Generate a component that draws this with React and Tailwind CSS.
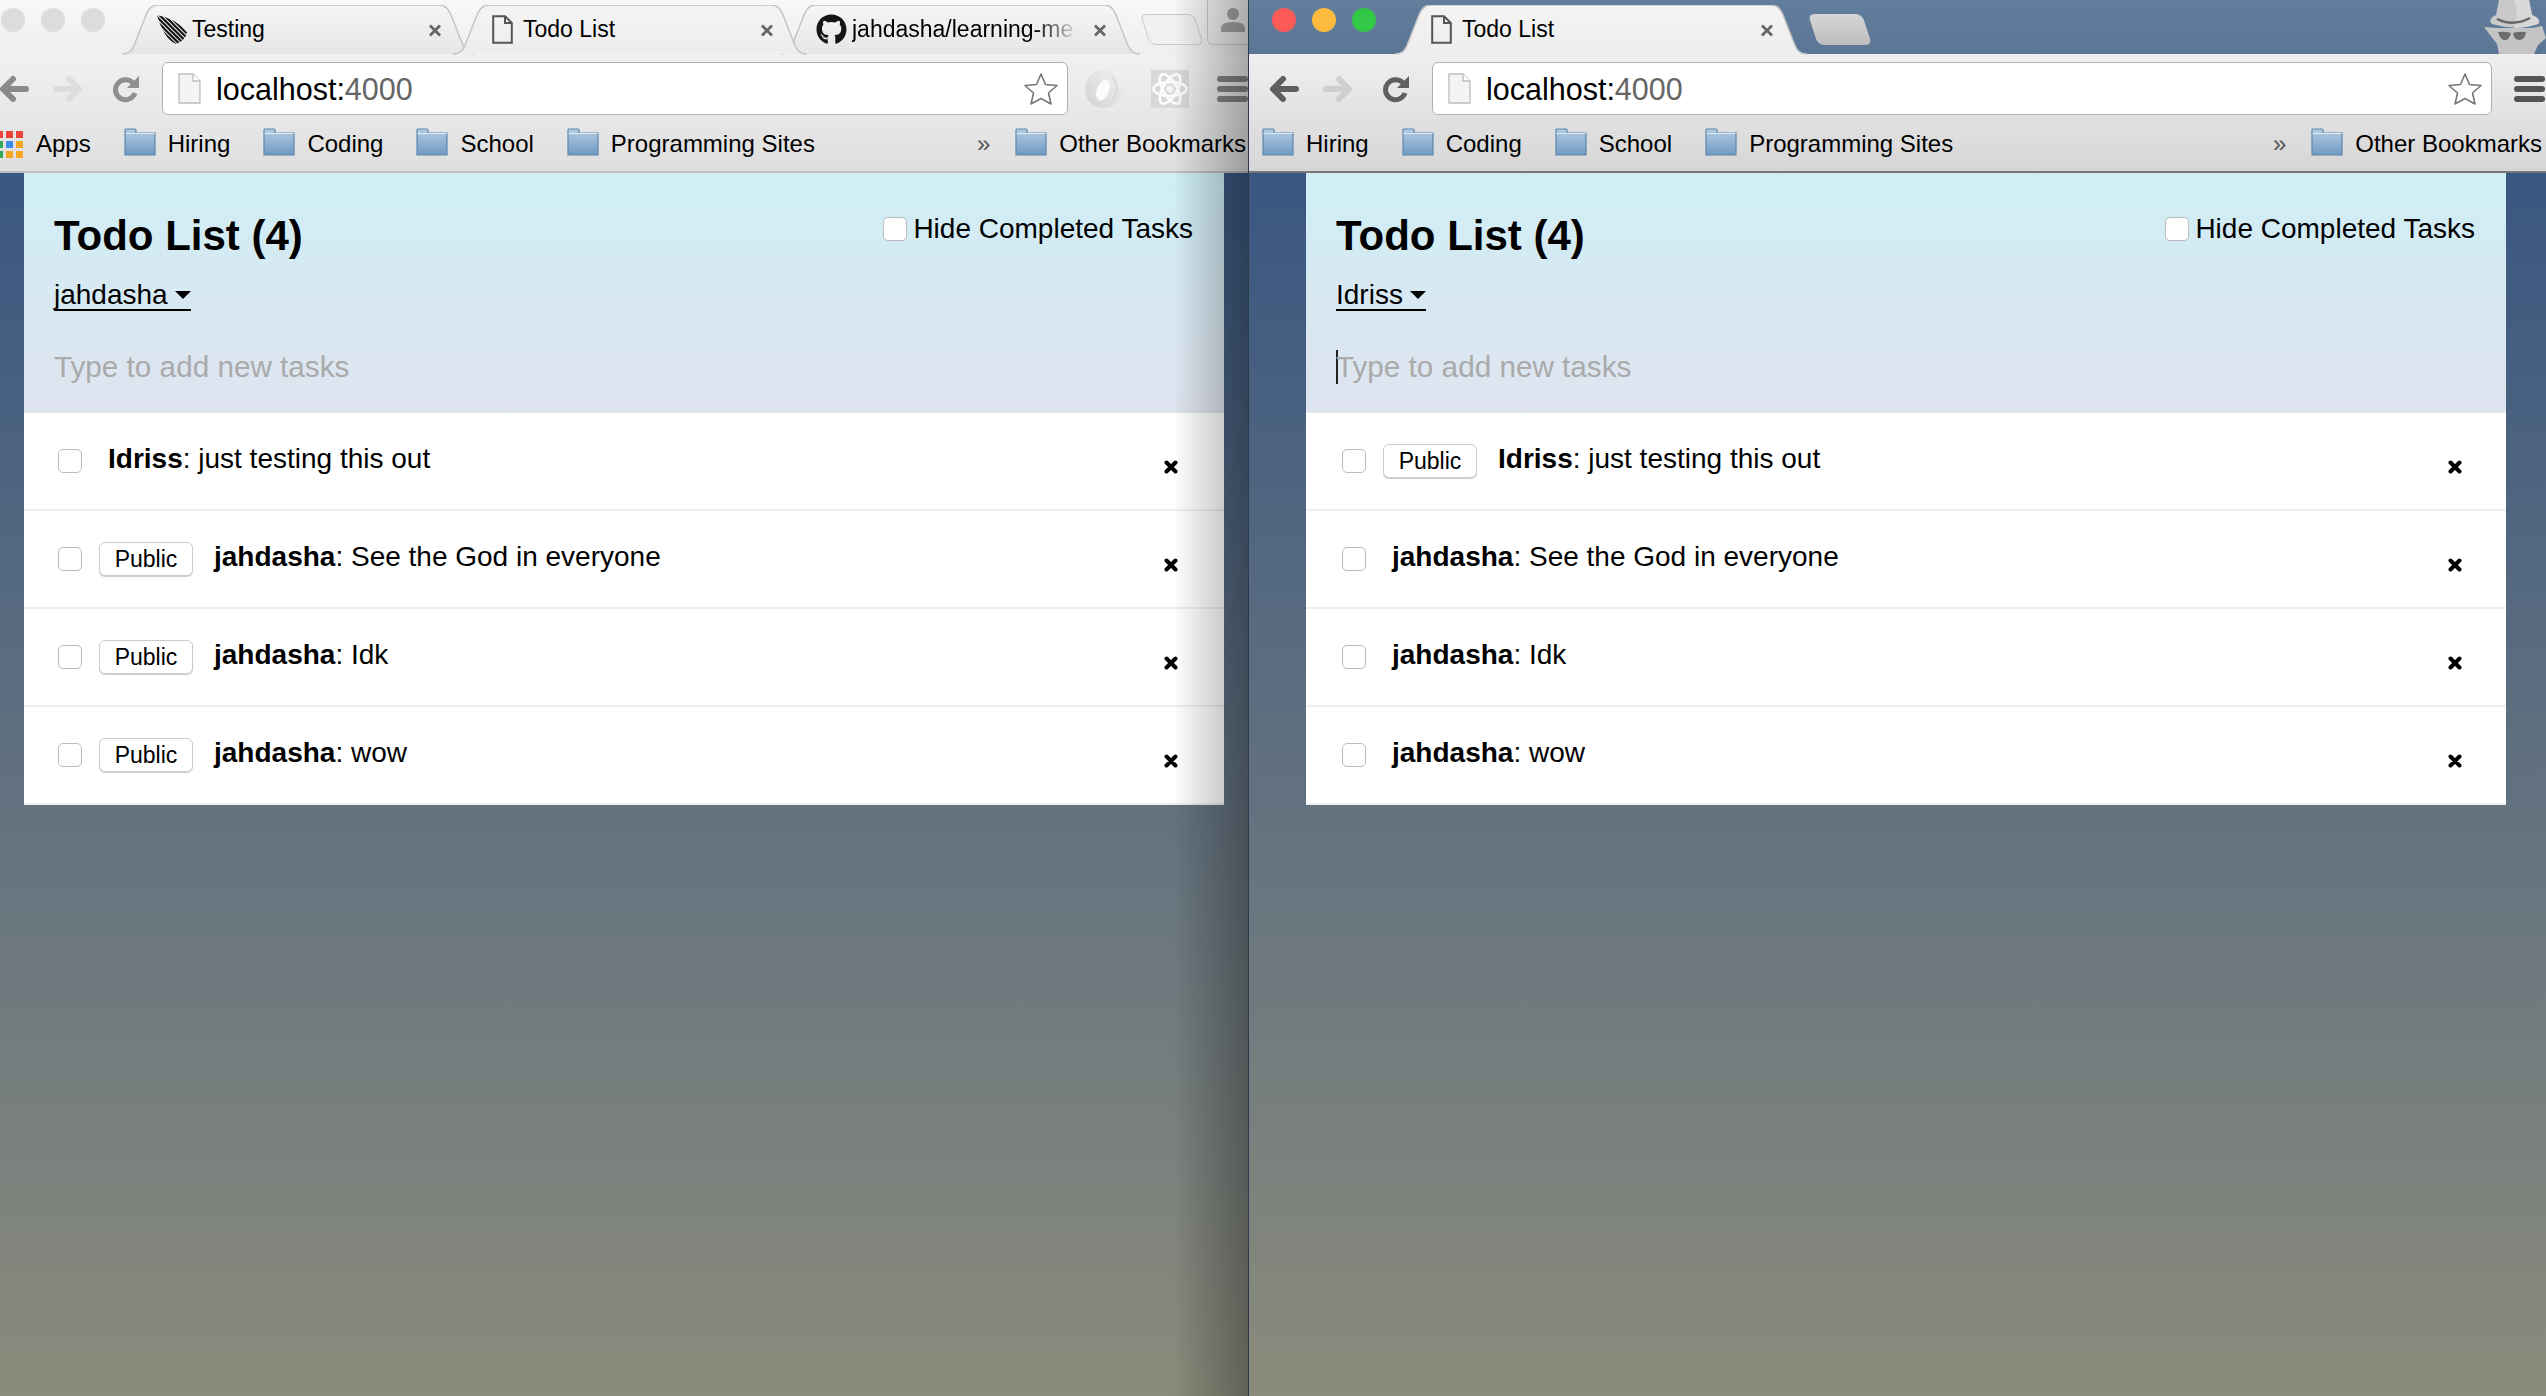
import React from 'react';
import { FaGithub } from 'react-icons/fa';

const BOOKMARKS = ['Hiring', 'Coding', 'School', 'Programming Sites'];

function Tab({ width, text, icon, gradient, className = '', textClass = '', gapClass = 'gap-[10px]', paddingClass = 'pl-[36px]' }) {
  const w = width;
  const d = `M0,49 C7,49 10,46 13,38 L24,10 C27,3 30,0 37,0 L${w - 37},0 C${w - 30},0 ${w - 27},3 ${w - 24},10 L${w - 13},38 C${w - 10},46 ${w - 7},49 ${w},49`;
  return (
    <div className={`relative h-[49px] shrink-0 ${className}`}>
      <svg className="absolute inset-0" width={w} height="50" viewBox={`0 0 ${w} 50`}>
        <path d={d} fill={`url(#${gradient})`} stroke="#c4c4c4" strokeWidth="1.5" />
      </svg>
      <div className={`relative flex h-full items-center ${paddingClass} ${gapClass} text-[23px] text-black`}>
        {icon}
        <span className={`whitespace-nowrap ${textClass}`}>{text}</span>
      </div>
      <svg className="absolute right-[33px] top-[19px]" width="14" height="13" viewBox="0 0 14 13">
        <path d="M2 1.5 L12 11.5 M12 1.5 L2 11.5" stroke="#666" strokeWidth="2.8" />
      </svg>
    </div>
  );
}

function SharedDefs() {
  return (
    <svg width="0" height="0" className="absolute">
      <defs>
        <linearGradient id="tabIdle" x1="0" y1="0" x2="0" y2="1">
          <stop offset="0" stopColor="#f6f6f6" />
          <stop offset="1" stopColor="#e6e6e6" />
        </linearGradient>
        <linearGradient id="tabActive" x1="0" y1="0" x2="0" y2="1">
          <stop offset="0" stopColor="#f4f4f4" />
          <stop offset="1" stopColor="#ededed" />
        </linearGradient>
        <linearGradient id="folderFill" x1="0" y1="0" x2="0" y2="1">
          <stop offset="0" stopColor="#b3cde3" />
          <stop offset="1" stopColor="#6f9ac2" />
        </linearGradient>
        <linearGradient id="jsonFill" x1="0" y1="1" x2="1" y2="0">
          <stop offset="0" stopColor="#d2d2d2" />
          <stop offset="1" stopColor="#f2f2f2" />
        </linearGradient>
        <clipPath id="mochaClip">
          <path d="M0 0 Q18 3 30 17 Q29 25 19 29 Q7 24 0 0 Z" />
        </clipPath>
      </defs>
    </svg>
  );
}

function DocIcon() {
  return (
    <svg width="21" height="29" viewBox="0 0 21 29" className="shrink-0">
      <path d="M1.2 1.2 H13 L19.8 8 V27.8 H1.2 Z M13 1.2 V8 H19.8" fill="none" stroke="#555" strokeWidth="2" />
    </svg>
  );
}

function UrlDocIcon() {
  return (
    <svg width="23" height="31" viewBox="0 0 23 31" className="shrink-0">
      <path d="M1 1 H15 L22 8 V30 H1 Z" fill="#f4f4f4" stroke="#bdbdbd" strokeWidth="1.3" />
      <path d="M15 1 V8 H22" fill="#fff" stroke="#bdbdbd" strokeWidth="1.3" />
    </svg>
  );
}

function MochaIcon() {
  const offsets = [-20, -15.5, -11, -6.5, -2, 2.5, 7, 11.5, 16, 20.5];
  return (
    <svg width="30" height="30" viewBox="0 0 30 30" className="shrink-0">
      <g stroke="#111" strokeWidth="2.2" clipPath="url(#mochaClip)">
        {offsets.map((o) => (
          <path key={o} d={`M${o} 0 L${o + 30} 30`} />
        ))}
      </g>
    </svg>
  );
}

function Arrow({ color, flip }) {
  return (
    <svg width="31" height="28" viewBox="0 0 31 28" className={`shrink-0 ${flip ? '-scale-x-100' : ''}`}>
      <path d="M28 14 H6 M15 4 L5 14 L15 24" fill="none" stroke={color} strokeWidth="6" strokeLinecap="round" strokeLinejoin="round" />
    </svg>
  );
}

function Reload({ color }) {
  return (
    <svg width="28" height="28" viewBox="0 0 28 28" className="ml-[4px] shrink-0">
      <path d="M21 8 A10 10 0 1 0 23 18" fill="none" stroke={color} strokeWidth="5" />
      <path d="M27 1 V13 H15 Z" fill={color} />
    </svg>
  );
}

function Star() {
  return (
    <svg width="36" height="34" viewBox="0 0 36 34" className="shrink-0">
      <path d="M18 2 L22.5 12.5 L34 13.5 L25.5 21 L28 32 L18 26.5 L8 32 L10.5 21 L2 13.5 L13.5 12.5 Z" fill="#fff" stroke="#777" strokeWidth="1.6" strokeLinejoin="round" />
    </svg>
  );
}

function Hamburger({ color }) {
  return (
    <div className="flex w-[31px] shrink-0 flex-col gap-[4px]">
      <div className={`h-[6px] rounded-full ${color}`} />
      <div className={`h-[6px] rounded-full ${color}`} />
      <div className={`h-[6px] rounded-full ${color}`} />
    </div>
  );
}

function Folder() {
  return (
    <svg width="32" height="28" viewBox="0 0 32 28" className="-mt-[5px] shrink-0">
      <path d="M1 27 V2 Q1 1 2 1 H11 Q12 1 12 2 V5 H31 V27 Z" fill="url(#folderFill)" stroke="#5d86ad" strokeWidth="1.2" />
      <path d="M1.5 5.5 H30.5" stroke="#dfeaf3" strokeWidth="1" />
    </svg>
  );
}

function Bookmark({ label }) {
  return (
    <div className="flex items-center gap-[12px] whitespace-nowrap">
      <Folder />
      <span>{label}</span>
    </div>
  );
}

function AppsIcon() {
  const cells = [
    ['#ea4335', '#ea4335', '#ea4335'],
    ['#34a853', '#3b8ee8', '#f5a623'],
    ['#34a853', '#f5a623', '#f5a623'],
  ];
  return (
    <svg width="23" height="27" viewBox="0 0 23 27" className="shrink-0">
      {cells.map((row, y) =>
        row.map((fill, x) => <rect key={`${x}-${y}`} x={x * 10 - 4} y={y * 10} width="7" height="7" fill={fill} />)
      )}
    </svg>
  );
}

function Incognito() {
  return (
    <svg width="62" height="54" viewBox="0 0 62 54" className="shrink-0">
      <path d="M0 27 L14 28 H48 L58 26 L62 38 L54 45 L50 54 H15 L13 44 Z" fill="#c4c4c4" />
      <path d="M15 0 H45 L48 15 Q58 19 54 24 Q32 31 8 24 Q3 19 12 15 Z" fill="#c9c9c9" />
      <path d="M30 0 H45 L48 15 Q58 19 54 24 Q42 28 30 28 Q36 14 30 0 Z" fill="#d8d8d8" />
      <path d="M13 19 Q29 27 46 18" fill="none" stroke="#666" strokeWidth="2.4" />
      <path d="M14 32 Q21 31 27 33 Q25 41 20 40 Q16 39 14 32 Z M29 33 Q35 31 42 32 Q41 40 35 40 Q30 40 29 33 Z" fill="#6c6c6c" />
    </svg>
  );
}

function JsonIcon() {
  return (
    <svg width="38" height="38" viewBox="0 0 38 38" className="shrink-0">
      <circle cx="19" cy="19" r="19" fill="url(#jsonFill)" />
      <ellipse cx="18" cy="20" rx="6" ry="11" fill="#fbfbfb" transform="rotate(22 18 20)" />
      <path d="M27 6 Q36 18 28 30" fill="none" stroke="#dadada" strokeWidth="2" />
    </svg>
  );
}

function ReactIcon() {
  return (
    <div className="flex h-[38px] w-[38px] shrink-0 items-center justify-center bg-[#d8d8d8]">
      <svg width="36" height="34" viewBox="0 0 36 34">
        <g fill="none" stroke="#fcfcfc" strokeWidth="2.6">
          <ellipse cx="18" cy="17" rx="16.5" ry="7" />
          <ellipse cx="18" cy="17" rx="16.5" ry="7" transform="rotate(60 18 17)" />
          <ellipse cx="18" cy="17" rx="16.5" ry="7" transform="rotate(120 18 17)" />
        </g>
        <circle cx="18" cy="17" r="3.5" fill="#f4f4f4" />
      </svg>
    </div>
  );
}

function UrlBar({ className }) {
  return (
    <div className={`flex h-[53px] shrink-0 items-center rounded-[6px] border-[1.5px] border-[#b0b0b0] bg-white pl-[15px] pr-[8px] ${className}`}>
      <UrlDocIcon />
      <span className="ml-[15px] pt-[2px] text-[30.5px] text-black">
        localhost:<span className="text-[#666]">4000</span>
      </span>
      <div className="ml-auto">
        <Star />
      </div>
    </div>
  );
}

function Checkbox({ className = '' }) {
  return <div className={`h-[24px] w-[24px] shrink-0 rounded-[5px] border border-[#bbb] bg-white ${className}`} />;
}

function PublicTag() {
  return (
    <div className="ml-[17px] flex h-[34px] w-[94px] shrink-0 items-center justify-center rounded-[6px] border border-[#ccc] bg-white text-[23px] text-black shadow-[0_1px_1px_rgba(0,0,0,0.2)]">
      Public
    </div>
  );
}

function TodoRow({ user, text, isPublic, rowClass }) {
  return (
    <div className={`flex h-[98px] items-center border-b-2 border-[#eee] text-[28px] text-black ${rowClass}`}>
      <Checkbox />
      {isPublic ? <PublicTag /> : null}
      <div className={`-mt-[4px] ${isPublic ? 'ml-[21px]' : 'ml-[26px]'} whitespace-nowrap`}>
        <span className="font-bold">{user}</span>: {text}
      </div>
      <svg className="ml-auto mt-[12px]" width="14" height="14" viewBox="0 0 14 14">
        <path d="M2.5 2.5 L11.5 11.5 M11.5 2.5 L2.5 11.5" stroke="#000" strokeWidth="4" strokeLinecap="round" />
      </svg>
    </div>
  );
}

function Panel({ user, focused, publicIdx, rowClass }) {
  const rows = [
    { user: 'Idriss', text: 'just testing this out', isPublic: publicIdx.includes(0) },
    { user: 'jahdasha', text: 'See the God in everyone', isPublic: publicIdx.includes(1) },
    { user: 'jahdasha', text: 'Idk', isPublic: publicIdx.includes(2) },
    { user: 'jahdasha', text: 'wow', isPublic: publicIdx.includes(3) },
  ];
  return (
    <div className="w-[1200px]">
      <div className="h-[240px] bg-linear-to-b from-[#cfeef6] to-[#dfe4ef] pl-[30px] pr-[31px]">
        <div className="flex justify-between">
          <div>
            <div className="mt-[39px] text-[42px] font-bold leading-[48px] text-black">Todo List (4)</div>
            <div className="mt-[19px] inline-flex h-[32px] items-center gap-[7px] border-b-2 border-black pt-[2px] text-[28px] leading-[28px] text-black">
              {user}
              <svg width="16" height="8" viewBox="0 0 16 8">
                <path d="M0 0 H16 L8 8 Z" fill="#000" />
              </svg>
            </div>
          </div>
          <div className="mt-[40px] flex h-[32px] items-center gap-[6px] text-[28px] text-black">
            <Checkbox />
            Hide Completed Tasks
          </div>
        </div>
        <div className="mt-[35px] flex h-[36px] items-center text-[29.7px] leading-[36px] text-[#aaa]">
          {focused ? <div className="-mr-[2px] h-[34px] w-[2px] bg-[#222]" /> : null}
          Type to add new tasks
        </div>
      </div>
      <div className="bg-white">
        {rows.map((r, i) => (
          <TodoRow key={i} {...r} rowClass={rowClass} />
        ))}
      </div>
    </div>
  );
}

export default function App() {
  return (
    <div
      className="flex h-[1396px] w-[2546px] overflow-hidden bg-linear-to-b from-[#2e4f80] via-[#65737f] via-60% to-[#8b8b7b] text-[24px]"
      style={{ fontFamily: '"Liberation Sans", Arial, sans-serif' }}
    >
      <SharedDefs />

      {/* left window, inactive */}
      <div className="relative w-[1248px] shrink-0 overflow-hidden">
        <div className="h-[54px] bg-linear-to-b from-[#f8f8f8] to-[#eeeeee]">
          <div className="flex h-[54px] items-end">
            <div className="flex h-[54px] w-[122px] shrink-0 gap-[16px] pl-[1px] pt-[8px]">
              <div className="h-[24px] w-[24px] rounded-full bg-[#dcdcdc]" />
              <div className="h-[24px] w-[24px] rounded-full bg-[#dcdcdc]" />
              <div className="h-[24px] w-[24px] rounded-full bg-[#dcdcdc]" />
            </div>
            <Tab width={353} gradient="tabIdle" className="w-[353px]" text="Testing" icon={<MochaIcon />} gapClass="gap-[5px]" paddingClass="pl-[35px]" />
            <Tab width={354} gradient="tabActive" className="z-10 -ml-[22px] w-[354px]" text="Todo List" icon={<DocIcon />} paddingClass="pl-[39px]" />
            <Tab
              width={360}
              gradient="tabIdle"
              className="-ml-[27px] w-[360px]"
              text="jahdasha/learning-me"
              icon={<FaGithub className="h-[31px] w-[31px] shrink-0 text-[#151515]" />}
              paddingClass="pl-[36px]"
              gapClass="gap-[5px]"
              textClass="w-[227px] bg-linear-to-r from-black from-80% to-transparent bg-clip-text text-transparent"
            />
            <div className="mb-[9px] ml-[5px] h-[31px] w-[54px] shrink-0 skew-x-[18deg] rounded-[6px] border border-[#ccc] bg-[#f1f1f1]" />
            <div className="mb-[9px] ml-[8px] flex h-[45px] w-[50px] shrink-0 justify-center self-start rounded-bl-[6px] border-b border-l border-[#ccc] pt-[8px]">
              <svg width="24" height="24" viewBox="0 0 24 24" className="shrink-0">
                <circle cx="12" cy="6" r="6" fill="#a8a8a8" />
                <path d="M0 24 V20 Q0 14 12 14 Q24 14 24 20 V24 Z" fill="#a8a8a8" />
              </svg>
            </div>
          </div>
        </div>
        <div className="h-[117px] bg-linear-to-b from-[#f1f1f1] to-[#dfdfdf]">
          <div className="flex h-[61px] items-end">
            <div className="-ml-[2px] flex h-[53px] w-[165px] items-center gap-[24px]">
              <Arrow color="#8a8a8a" />
              <Arrow color="#dcdcdc" flip />
              <Reload color="#8f8f8f" />
            </div>
            <UrlBar className="w-[906px]" />
            <div className="ml-[17px] flex h-[53px] items-center gap-[28px]">
              <JsonIcon />
              <ReactIcon />
              <Hamburger color="bg-[#858585]" />
            </div>
          </div>
          <div className="flex h-[56px] items-center gap-[33px] pt-[2px] text-black">
            <div className="flex items-center gap-[13px]">
              <AppsIcon />
              <span>Apps</span>
            </div>
            {BOOKMARKS.map((b) => (
              <Bookmark key={b} label={b} />
            ))}
            <div className="ml-auto flex items-center gap-[25px] pr-[2px]">
              <span className="text-[#555]">»</span>
              <Bookmark label="Other Bookmarks" />
            </div>
          </div>
        </div>
        <div className="border-t-2 border-[#bdbdbd] pl-[24px]">
          <Panel user="jahdasha" publicIdx={[1, 2, 3]} rowClass="pl-[34px] pr-[46px]" />
        </div>
        {/* shadow thrown by the window in front */}
        <div className="pointer-events-none absolute inset-y-0 right-0 z-20 w-[75px] bg-linear-to-r from-transparent to-black/30" />
      </div>

      {/* right window, incognito */}
      <div className="relative min-w-0 flex-1 border-l border-[#2c3a4c]">
        <div className="flex h-[54px] items-end bg-linear-to-b from-[#627e9c] to-[#5b7694]">
          <div className="flex h-[54px] w-[146px] shrink-0 gap-[16px] pl-[23px] pt-[8px]">
            <div className="h-[24px] w-[24px] rounded-full bg-[#fc5b57]" />
            <div className="h-[24px] w-[24px] rounded-full bg-[#fdbc40]" />
            <div className="h-[24px] w-[24px] rounded-full bg-[#33c748]" />
          </div>
          <Tab width={412} gradient="tabActive" className="w-[412px]" text="Todo List" icon={<DocIcon />} />
          <div className="mb-[9px] ml-[6px] h-[31px] w-[54px] shrink-0 skew-x-[18deg] rounded-[6px] bg-linear-to-b from-[#d6d6d6] to-[#bdbdbd]" />
          <div className="ml-auto flex">
            <Incognito />
          </div>
        </div>
        <div className="h-[117px] bg-linear-to-b from-[#efefef] to-[#d6d6d6]">
          <div className="flex h-[61px] items-end pl-[19px]">
            <div className="flex h-[53px] w-[164px] items-center gap-[24px]">
              <Arrow color="#5f5f5f" />
              <Arrow color="#cfcfcf" flip />
              <Reload color="#5f5f5f" />
            </div>
            <UrlBar className="w-[1060px]" />
            <div className="ml-[22px] flex h-[53px] items-center">
              <Hamburger color="bg-[#555]" />
            </div>
          </div>
          <div className="flex h-[56px] items-center gap-[33px] pl-[13px] pt-[2px] text-black">
            {BOOKMARKS.map((b) => (
              <Bookmark key={b} label={b} />
            ))}
            <div className="ml-auto flex items-center gap-[25px] pr-[4px]">
              <span className="text-[#555]">»</span>
              <Bookmark label="Other Bookmarks" />
            </div>
          </div>
        </div>
        <div className="border-t-2 border-[#777] pl-[57px]">
          <Panel user="Idriss" focused publicIdx={[0]} rowClass="pl-[36px] pr-[44px]" />
        </div>
      </div>
    </div>
  );
}
